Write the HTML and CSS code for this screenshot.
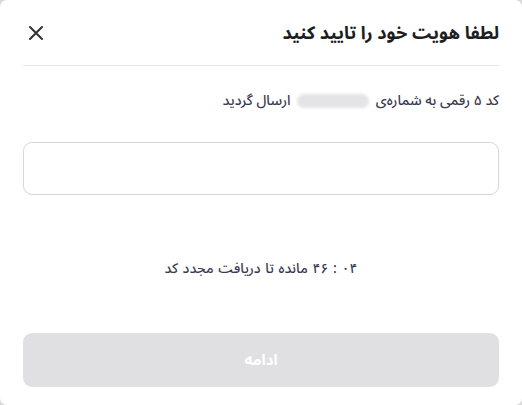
FILE: index.html
```html
<!DOCTYPE html>
<html lang="fa" dir="rtl">
<head>
<meta charset="utf-8">
<link rel="stylesheet" href="styles.css">
</head>
<body>
<div class="modal">
  <header class="modal-header">
    <h1 class="title">لطفا هویت خود را تایید کنید</h1>
    <button class="close" aria-label="بستن">
      <svg width="16" height="16" viewBox="0 0 16 16"><path d="M2 2L14 14M14 2L2 14" stroke="#333" stroke-width="2" stroke-linecap="round"/></svg>
    </button>
  </header>
  <p class="subtitle">کد ۵ رقمی به شماره‌ی <span class="masked"></span> ارسال گردید</p>
  <div class="code-input"></div>
  <p class="timer">۰۴ : ۴۶ مانده تا دریافت مجدد کد</p>
  <button class="submit">ادامه</button>
</div>
</body>
</html>
```
FILE: styles.css
```css
html, body {
  margin: 0;
  padding: 0;
  background: #d9d9d9;
}
.modal {
  width: 522px;
  height: 405px;
  box-sizing: border-box;
  background: #fff;
  border-radius: 7px;
  padding: 0 23px;
  display: flex;
  flex-direction: column;
  font-family: "Noto Sans Arabic", "Vazirmatn", "DejaVu Sans", sans-serif;
}
.modal-header {
  height: 66px;
  box-sizing: border-box;
  border-bottom: 1px solid #e6e6e6;
  display: flex;
  align-items: center;
  justify-content: space-between;
}
.title {
  margin: 0;
  font-size: 18px;
  font-weight: 700;
  color: #1e1e1e;
}
.close {
  border: 0;
  background: none;
  padding: 0;
  width: 16px;
  height: 16px;
  margin-left: 5px;
  display: flex;
}
.subtitle {
  margin: 20px 0 0;
  height: 30px;
  line-height: 30px;
  font-size: 14px;
  font-weight: 500;
  color: #3a3a52;
}
.masked {
  display: inline-block;
  width: 72px;
  height: 14px;
  border-radius: 7px;
  background: #e4e4e6;
  filter: blur(1.5px);
  vertical-align: middle;
  margin: 0 3px;
}
.code-input {
  margin-top: 26px;
  height: 53px;
  box-sizing: border-box;
  border: 1.5px solid #d7d7d9;
  border-radius: 9px;
}
.timer {
  margin: 62px 0 0;
  height: 24px;
  line-height: 24px;
  text-align: center;
  font-size: 14px;
  font-weight: 500;
  color: #3a3a52;
  word-spacing: 1px;
}
.submit {
  margin-top: 52px;
  height: 54px;
  border: 0;
  border-radius: 9px;
  background: #e0e0e2;
  color: #fff;
  font-family: inherit;
  font-size: 15px;
  font-weight: 700;
}
```
